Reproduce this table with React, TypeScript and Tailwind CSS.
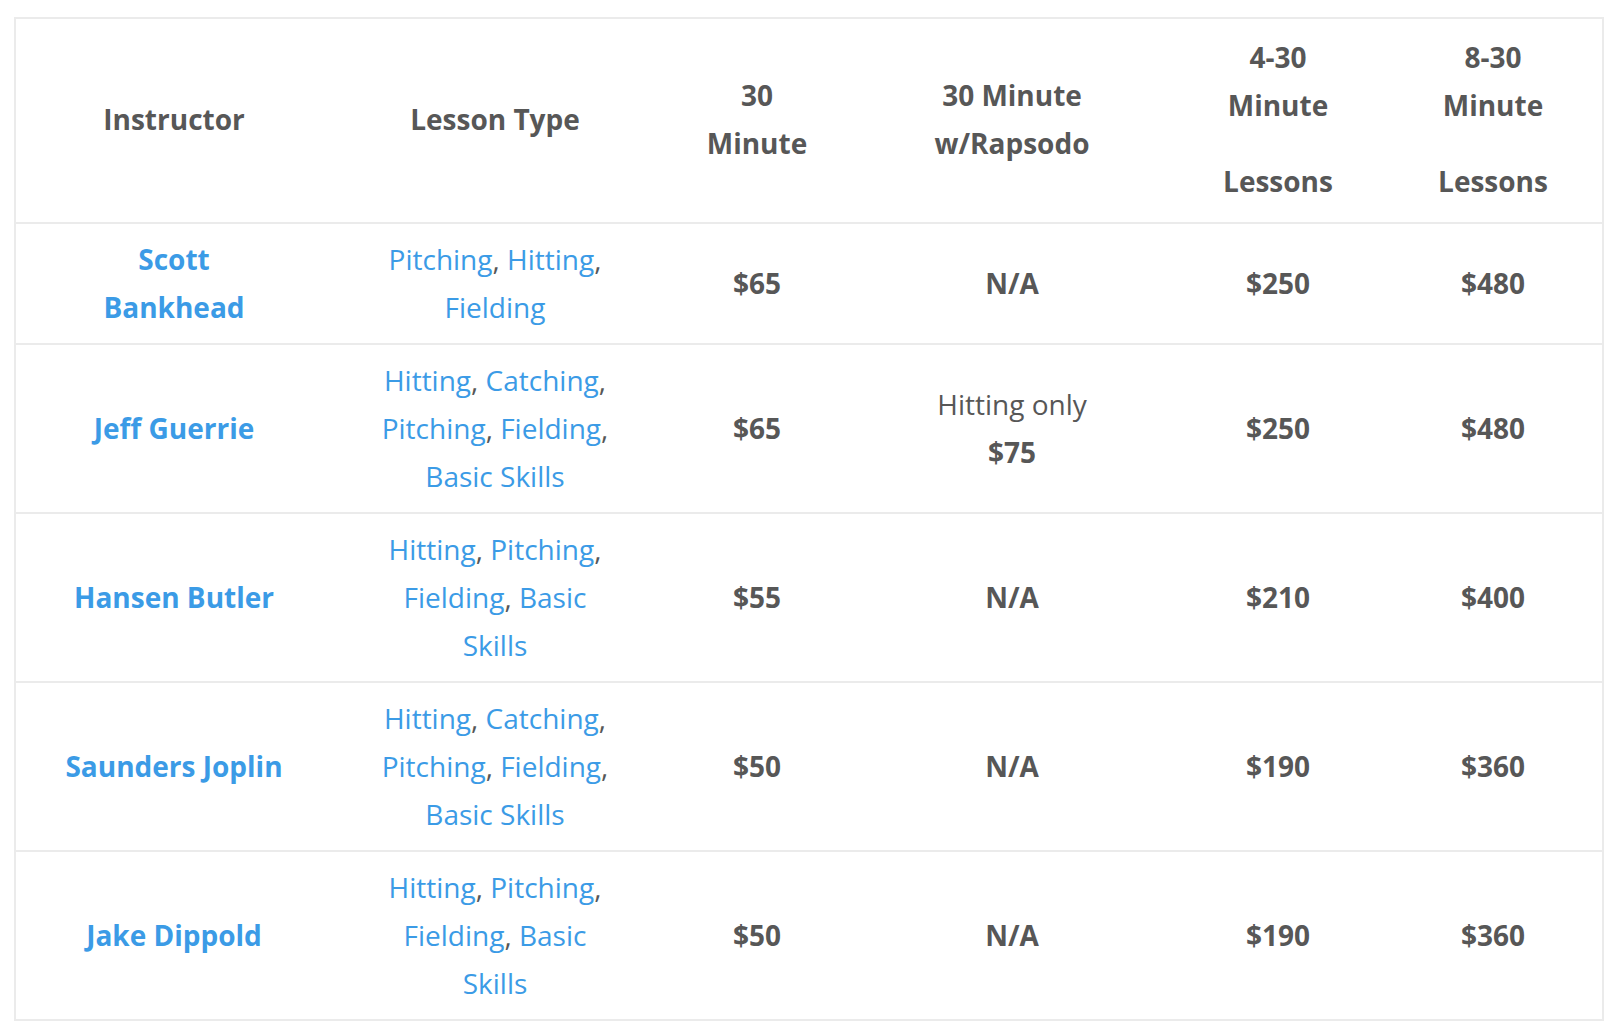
import React from "react";

type Row = {
  name: string[];
  lessons: string[];
  single: string;
  rapsodo: React.ReactNode;
  four: string;
  eight: string;
};

// "|" marks where a line breaks inside the lesson list
const rows: Row[] = [
  {
    name: ["Scott", "Bankhead"],
    lessons: ["Pitching", "Hitting", "|", "Fielding"],
    single: "$65",
    rapsodo: "N/A",
    four: "$250",
    eight: "$480",
  },
  {
    name: ["Jeff Guerrie"],
    lessons: ["Hitting", "Catching", "|", "Pitching", "Fielding", "|", "Basic Skills"],
    single: "$65",
    rapsodo: (
      <>
        <span className="font-normal">Hitting only</span>
        <br />
        $75
      </>
    ),
    four: "$250",
    eight: "$480",
  },
  {
    name: ["Hansen Butler"],
    lessons: ["Hitting", "Pitching", "|", "Fielding", "Basic|Skills"],
    single: "$55",
    rapsodo: "N/A",
    four: "$210",
    eight: "$400",
  },
  {
    name: ["Saunders Joplin"],
    lessons: ["Hitting", "Catching", "|", "Pitching", "Fielding", "|", "Basic Skills"],
    single: "$50",
    rapsodo: "N/A",
    four: "$190",
    eight: "$360",
  },
  {
    name: ["Jake Dippold"],
    lessons: ["Hitting", "Pitching", "|", "Fielding", "Basic|Skills"],
    single: "$50",
    rapsodo: "N/A",
    four: "$190",
    eight: "$360",
  },
];

// Lesson list: links are blue, the commas stay in body grey
const LessonCell = ({ items }: { items: string[] }) => {
  const links = items.filter((x) => x !== "|");
  let n = 0;
  return (
    <>
      {items.map((item, i) => {
        if (item === "|") return <br key={i} />;
        n++;
        const last = n === links.length;
        const parts = item.split("|");
        const nextIsBreak = items[i + 1] === "|";
        return (
          <React.Fragment key={i}>
            <a className="text-[#3b9be6]">
              {parts.map((p, pi) => (
                <React.Fragment key={pi}>
                  {pi > 0 && <br />}
                  {p}
                </React.Fragment>
              ))}
            </a>
            {!last && ","}
            {!last && !nextIsBreak && " "}
          </React.Fragment>
        );
      })}
    </>
  );
};

const App = () => {
  const th = "px-3 pt-[10px] pb-[14px] text-center font-bold align-middle";
  const td = "px-3 pt-[11px] pb-[12px] text-center align-middle border-t-2 border-[#ebebeb]";

  return (
    <div
      className="min-h-screen bg-white pt-[17px] pl-[14px] text-[#575757] text-[28px] leading-[48px]"
      style={{ fontFamily: '"Open Sans", "Liberation Sans", sans-serif' }}
    >
      <table className="w-[1588px] border-collapse border-2 border-[#ebebeb] table-fixed">
        <colgroup>
          <col className="w-[317px]" />
          <col className="w-[326px]" />
          <col className="w-[198px]" />
          <col className="w-[312px]" />
          <col className="w-[220px]" />
          <col className="w-[215px]" />
        </colgroup>
        <thead>
          <tr className="h-[205px]">
            <th className={th}>Instructor</th>
            <th className={th}>Lesson Type</th>
            <th className={th}>
              30
              <br />
              Minute
            </th>
            <th className={th}>
              30 Minute
              <br />
              w/Rapsodo
            </th>
            <th className={th}>
              4-30
              <br />
              Minute
              <div className="mt-[28px]">Lessons</div>
            </th>
            <th className={`${th} pr-[16px]`}>
              8-30
              <br />
              Minute
              <div className="mt-[28px]">Lessons</div>
            </th>
          </tr>
        </thead>
        <tbody>
          {rows.map((r, idx) => (
            <tr key={idx}>
              <td className={`${td} font-bold text-[#3b9be6]`}>
                {r.name.map((n, ni) => (
                  <div key={ni}>{n}</div>
                ))}
              </td>
              <td className={td}>
                <LessonCell items={r.lessons} />
              </td>
              <td className={`${td} font-bold`}>{r.single}</td>
              <td className={`${td} font-bold`}>{r.rapsodo}</td>
              <td className={`${td} font-bold`}>{r.four}</td>
              <td className={`${td} font-bold pr-[16px]`}>{r.eight}</td>
            </tr>
          ))}
        </tbody>
      </table>
    </div>
  );
};

export default App;
